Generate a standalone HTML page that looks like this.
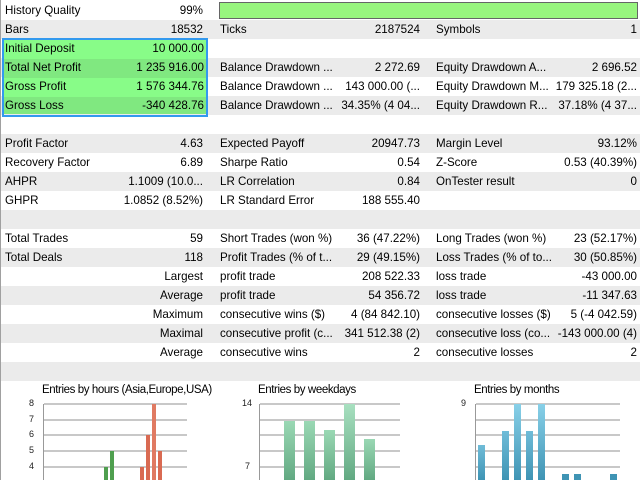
<!DOCTYPE html><html><head><style>
body{margin:0;width:640px;height:480px;overflow:hidden;background:#fff;font-family:"Liberation Sans",sans-serif;font-size:11.6px;color:#000;position:relative}
.r{position:absolute;left:1px;width:639px;height:19px;line-height:19px}
.g{background:#ebebeb}
.r span{position:absolute;white-space:nowrap}
.a{left:4px}.b{right:437px}.c{left:219px}.d{right:220px}.e{left:435px}.f{right:3px}
.gb{position:absolute;left:2px;top:38px;width:202px;height:75px;border:2px solid #3399ee}
.ax{position:absolute;font-size:9px;color:#222}
.t{position:absolute;font-size:11.5px;letter-spacing:-0.4px}
.gl{position:absolute;height:2px;background:#c8c8c8}
.bar{position:absolute;bottom:0}
</style></head><body>
<div style="position:absolute;left:0;top:0;width:1px;height:480px;background:#a0a0a0"></div>
<div class="r" style="top:1px"><span class="a">History Quality</span><span class="b">99%</span></div>
<div style="position:absolute;left:219px;top:2px;width:417px;height:15px;border:1px solid #666;background:#98f57e"></div>
<div class="r g" style="top:20px"><span class="a">Bars</span><span class="b">18532</span><span class="c">Ticks</span><span class="d">2187524</span><span class="e">Symbols</span><span class="f">1</span></div>
<div class="r" style="top:39px"></div>
<div class="r g" style="top:58px"><span class="c">Balance Drawdown ...</span><span class="d">2 272.69</span><span class="e">Equity Drawdown A...</span><span class="f">2 696.52</span></div>
<div class="r" style="top:77px"><span class="c">Balance Drawdown ...</span><span class="d">143 000.00 (...</span><span class="e">Equity Drawdown M...</span><span class="f">179 325.18 (2...</span></div>
<div class="r g" style="top:96px"><span class="c">Balance Drawdown ...</span><span class="d">34.35% (4 04...</span><span class="e">Equity Drawdown R...</span><span class="f">37.18% (4 37...</span></div>
<div style="position:absolute;left:4px;top:40px;width:202px;height:19px;background:#88fc88"></div>
<div style="position:absolute;left:4px;top:59px;width:202px;height:19px;background:#80e880"></div>
<div style="position:absolute;left:4px;top:78px;width:202px;height:19px;background:#88fc88"></div>
<div style="position:absolute;left:4px;top:97px;width:202px;height:17px;background:#80e880"></div>
<div class="r" style="top:39px;width:206px;background:none"><span class="a">Initial Deposit</span><span style="right:3px">10 000.00</span></div>
<div class="r" style="top:58px;width:206px"><span class="a">Total Net Profit</span><span style="right:3px">1 235 916.00</span></div>
<div class="r" style="top:77px;width:206px"><span class="a">Gross Profit</span><span style="right:3px">1 576 344.76</span></div>
<div class="r" style="top:96px;width:206px"><span class="a">Gross Loss</span><span style="right:3px">-340 428.76</span></div>
<div class="gb"></div>
<div class="r g" style="top:134px"><span class="a">Profit Factor</span><span class="b">4.63</span><span class="c">Expected Payoff</span><span class="d">20947.73</span><span class="e">Margin Level</span><span class="f">93.12%</span></div>
<div class="r" style="top:153px"><span class="a">Recovery Factor</span><span class="b">6.89</span><span class="c">Sharpe Ratio</span><span class="d">0.54</span><span class="e">Z-Score</span><span class="f">0.53 (40.39%)</span></div>
<div class="r g" style="top:172px"><span class="a">AHPR</span><span class="b">1.1009 (10.0...</span><span class="c">LR Correlation</span><span class="d">0.84</span><span class="e">OnTester result</span><span class="f">0</span></div>
<div class="r" style="top:191px"><span class="a">GHPR</span><span class="b">1.0852 (8.52%)</span><span class="c">LR Standard Error</span><span class="d">188 555.40</span></div>
<div class="r g" style="top:210px"></div>
<div class="r" style="top:229px"><span class="a">Total Trades</span><span class="b">59</span><span class="c">Short Trades (won %)</span><span class="d">36 (47.22%)</span><span class="e">Long Trades (won %)</span><span class="f">23 (52.17%)</span></div>
<div class="r g" style="top:248px"><span class="a">Total Deals</span><span class="b">118</span><span class="c">Profit Trades (% of t...</span><span class="d">29 (49.15%)</span><span class="e">Loss Trades (% of to...</span><span class="f">30 (50.85%)</span></div>
<div class="r" style="top:267px"><span class="b">Largest</span><span class="c">profit trade</span><span class="d">208 522.33</span><span class="e">loss trade</span><span class="f">-43 000.00</span></div>
<div class="r g" style="top:286px"><span class="b">Average</span><span class="c">profit trade</span><span class="d">54 356.72</span><span class="e">loss trade</span><span class="f">-11 347.63</span></div>
<div class="r" style="top:305px"><span class="b">Maximum</span><span class="c">consecutive wins ($)</span><span class="d">4 (84 842.10)</span><span class="e">consecutive losses ($)</span><span class="f">5 (-4 042.59)</span></div>
<div class="r g" style="top:324px"><span class="b">Maximal</span><span class="c">consecutive profit (c...</span><span class="d">341 512.38 (2)</span><span class="e">consecutive loss (co...</span><span class="f">-143 000.00 (4)</span></div>
<div class="r" style="top:343px"><span class="b">Average</span><span class="c">consecutive wins</span><span class="d">2</span><span class="e">consecutive losses</span><span class="f">2</span></div>
<div class="r g" style="top:362px;height:19px"></div>

<!-- chart 1 -->
<div class="t" style="left:42px;top:384px">Entries by hours (Asia,Europe,USA)</div>
<div style="position:absolute;left:43px;top:404px;width:1px;height:76px;background:#999"></div>
<div class="gl" style="left:44px;top:403px;width:143px"></div>
<div class="gl" style="left:44px;top:419px;width:143px"></div>
<div class="gl" style="left:44px;top:434px;width:143px"></div>
<div class="gl" style="left:44px;top:450px;width:143px"></div>
<div class="gl" style="left:44px;top:466px;width:143px"></div>
<div class="ax" style="left:29px;top:398px">8</div><div class="ax" style="left:29px;top:414px">7</div><div class="ax" style="left:29px;top:429px">6</div><div class="ax" style="left:29px;top:445px">5</div><div class="ax" style="left:29px;top:461px">4</div>
<div class="bar" style="left:104px;top:467px;width:4px;background:#4f9f4f"></div>
<div class="bar" style="left:110px;top:451px;width:4px;background:#4f9f4f"></div>
<div class="bar" style="left:140px;top:467px;width:4px;background:#d96a52"></div>
<div class="bar" style="left:146px;top:435px;width:4px;background:#d96a52"></div>
<div class="bar" style="left:152px;top:404px;width:4px;background:#e07a62"></div>
<div class="bar" style="left:158px;top:451px;width:4px;background:#d96a52"></div>

<!-- chart 2 -->
<div class="t" style="left:258px;top:384px">Entries by weekdays</div>
<div style="position:absolute;left:259px;top:404px;width:1px;height:76px;background:#999"></div>
<div class="gl" style="left:260px;top:403px;width:140px"></div>
<div class="gl" style="left:260px;top:419px;width:140px"></div>
<div class="gl" style="left:260px;top:434px;width:140px"></div>
<div class="gl" style="left:260px;top:450px;width:140px"></div>
<div class="gl" style="left:260px;top:466px;width:140px"></div>
<div class="ax" style="left:242px;top:398px">14</div><div class="ax" style="left:245px;top:461px">7</div>
<div class="bar" style="left:284px;top:421px;width:11px;background:linear-gradient(#9ad8b4,#62a982)"></div>
<div class="bar" style="left:304px;top:421px;width:11px;background:linear-gradient(#9ad8b4,#62a982)"></div>
<div class="bar" style="left:324px;top:430px;width:11px;background:linear-gradient(#9ad8b4,#62a982)"></div>
<div class="bar" style="left:344px;top:404px;width:11px;background:linear-gradient(#a8e0c0,#62a982)"></div>
<div class="bar" style="left:364px;top:439px;width:11px;background:linear-gradient(#9ad8b4,#62a982)"></div>

<!-- chart 3 -->
<div class="t" style="left:474px;top:384px">Entries by months</div>
<div style="position:absolute;left:475px;top:404px;width:1px;height:76px;background:#999"></div>
<div class="gl" style="left:476px;top:403px;width:144px"></div>
<div class="gl" style="left:476px;top:419px;width:144px"></div>
<div class="gl" style="left:476px;top:434px;width:144px"></div>
<div class="gl" style="left:476px;top:450px;width:144px"></div>
<div class="gl" style="left:476px;top:466px;width:144px"></div>
<div class="ax" style="left:461px;top:398px">9</div>
<div class="bar" style="left:478px;top:445px;width:7px;background:linear-gradient(#70bcd8,#3f94b4)"></div>
<div class="bar" style="left:502px;top:431px;width:7px;background:linear-gradient(#70bcd8,#3f94b4)"></div>
<div class="bar" style="left:514px;top:404px;width:7px;background:linear-gradient(#88d0e8,#3f94b4)"></div>
<div class="bar" style="left:526px;top:431px;width:7px;background:linear-gradient(#70bcd8,#3f94b4)"></div>
<div class="bar" style="left:538px;top:404px;width:7px;background:linear-gradient(#88d0e8,#3f94b4)"></div>
<div class="bar" style="left:562px;top:474px;width:7px;background:#3f94b4"></div>
<div class="bar" style="left:574px;top:474px;width:7px;background:#3f94b4"></div>
<div class="bar" style="left:610px;top:474px;width:7px;background:#3f94b4"></div>
</body></html>
